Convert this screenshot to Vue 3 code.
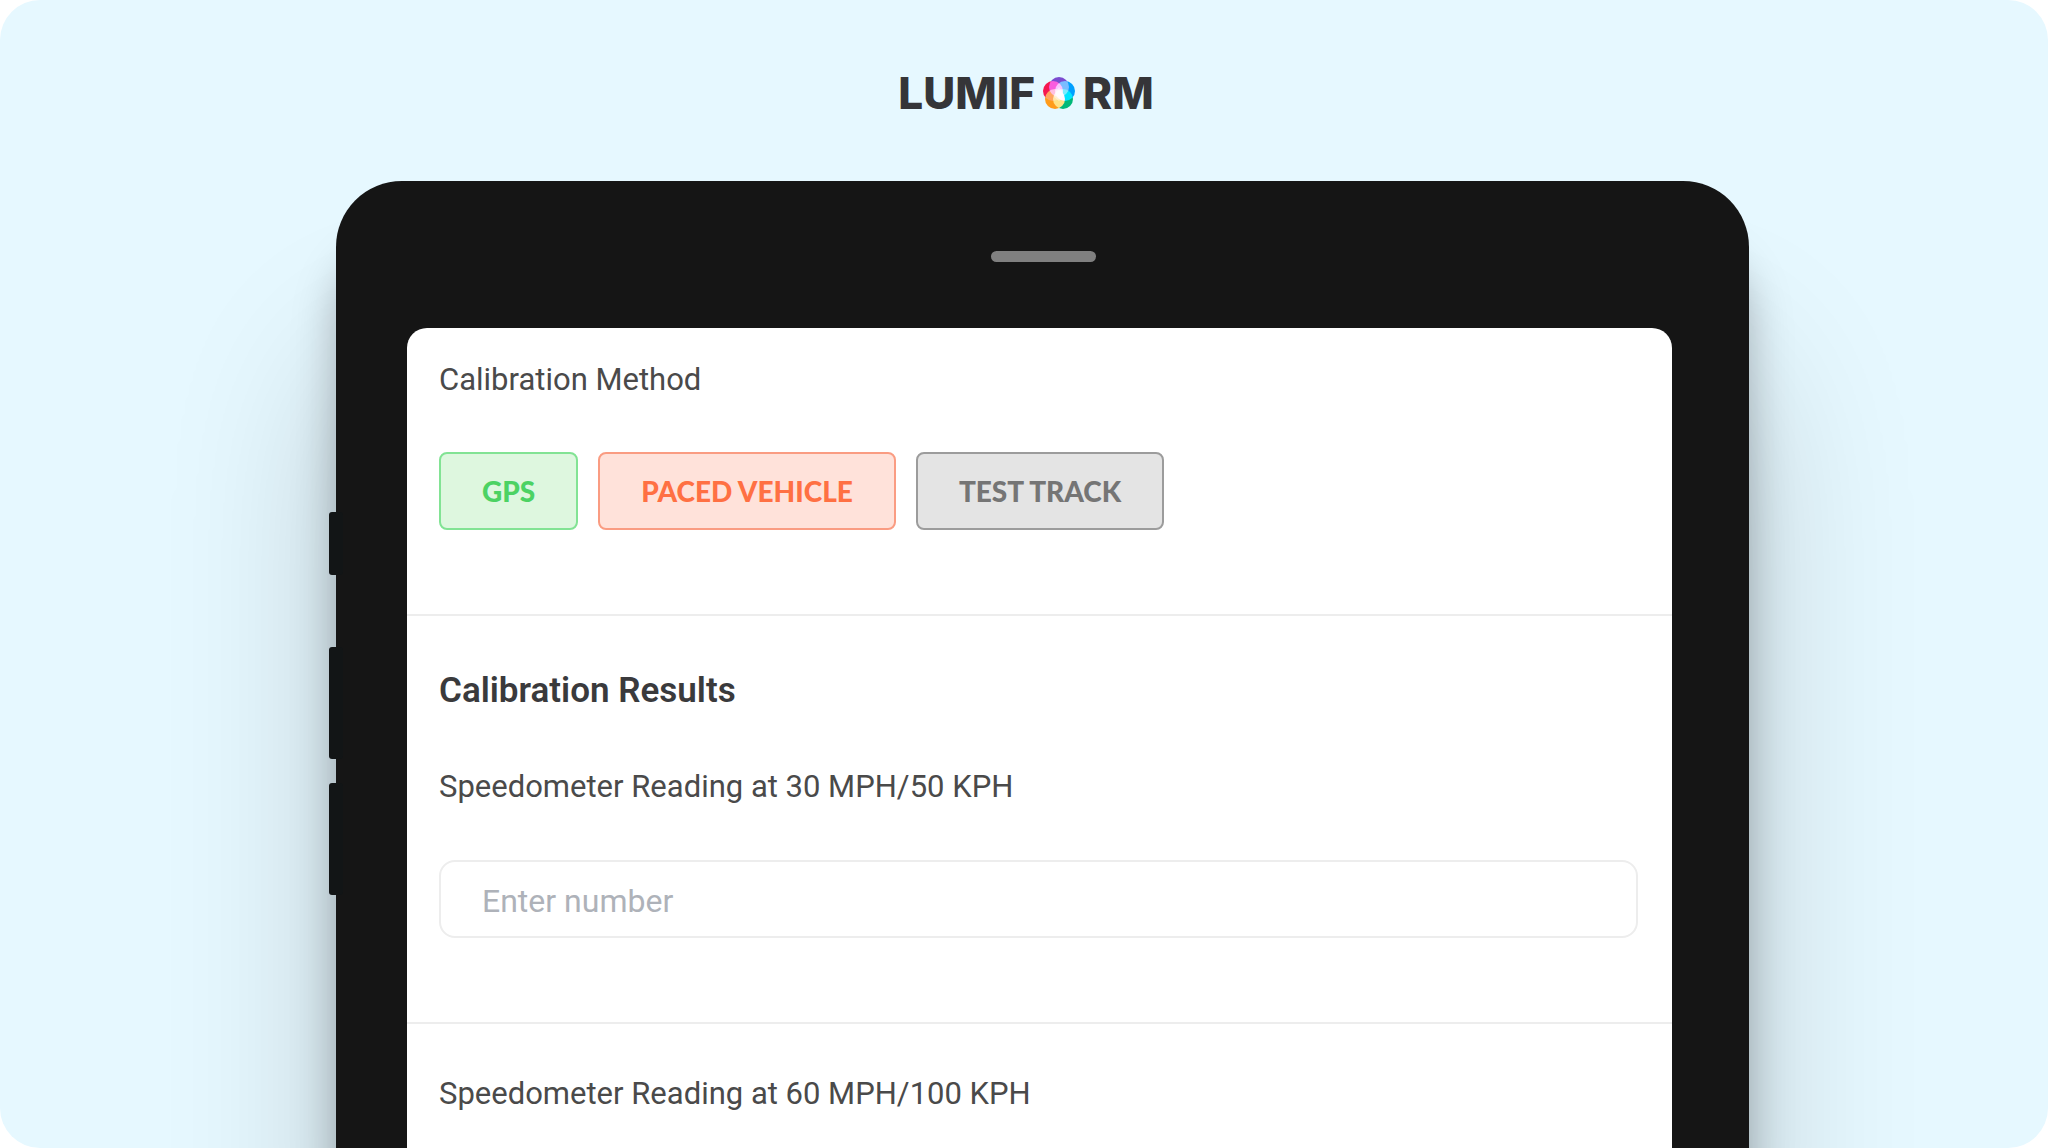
<script setup>
import { ref } from 'vue'

const methods = [
  { label: 'GPS', tone: 'green' },
  { label: 'PACED VEHICLE', tone: 'orange' },
  { label: 'TEST TRACK', tone: 'grey' },
]
const petals = [
  { cx: 16, cy: 10, fill: '#7b4bd0' },
  { cx: 22, cy: 14, fill: '#00a0ff' },
  { cx: 20, cy: 22, fill: '#00b878' },
  { cx: 12, cy: 22, fill: '#ff9c1a' },
  { cx: 10, cy: 14, fill: '#f5184f' },
]
const reading = ref('')
</script>

<template>
  <main class="scene">
    <header class="brand">
      <span>LUMIF</span>
      <svg class="flower" viewBox="0 0 32 32" aria-hidden="true">
        <circle v-for="p in petals" :key="p.fill" class="petal" :cx="p.cx" :cy="p.cy" r="10" :fill="p.fill" />
        <path d="M16 10 L19 14 L21 20 L16 24 L11 20 L13 14 Z" fill="#fff" opacity=".45" />
      </svg>
      <span>RM</span>
    </header>

    <div class="tablet">
      <div class="side-keys" aria-hidden="true">
        <i class="key small"></i>
        <i class="key"></i>
        <i class="key"></i>
      </div>
      <div class="bezel"><div class="speaker"></div></div>
      <form class="screen" @submit.prevent>
        <section class="first">
          <p id="method" class="label">Calibration Method</p>
          <div class="choices" role="group" aria-labelledby="method">
            <button v-for="m in methods" :key="m.label" type="button" :class="m.tone">{{ m.label }}</button>
          </div>
        </section>
        <section>
          <h2>Calibration Results</h2>
          <label class="label" for="reading30">Speedometer Reading at 30 MPH/50 KPH</label>
          <input id="reading30" v-model="reading" type="text" inputmode="decimal" placeholder="Enter number" />
        </section>
        <section class="last">
          <p class="label">Speedometer Reading at 60 MPH/100 KPH</p>
        </section>
      </form>
    </div>
  </main>
</template>

<style>
body {
  margin: 0;
  background: #fff;
}
</style>

<style scoped>
* {
  box-sizing: border-box;
}
.scene {
  display: flex;
  flex-direction: column;
  min-height: 100vh;
  overflow: hidden;
  border-radius: 40px;
  background: #e6f8ff;
  font-family: Roboto, sans-serif;
}
.brand {
  display: flex;
  align-items: center;
  justify-content: center;
  gap: 8px;
  height: 181px;
  padding: 4px 0 0 4px;
  color: #353538;
  font: 800 44px/48px Inter, sans-serif;
}
.flower {
  width: 32px;
  height: 32px;
  isolation: isolate;
}
.petal {
  mix-blend-mode: screen;
}
.tablet {
  position: relative;
  display: flex;
  flex: 1;
  flex-direction: column;
  margin: 0 299px 0 336px;
  padding: 0 77px 0 71px;
  border-radius: 66px 66px 0 0;
  background: #151515;
  box-shadow: 0 180px 170px rgba(0, 0, 0, 0.19), 0 70px 44px rgba(0, 0, 0, 0.26);
}
.side-keys {
  position: absolute;
  top: 331px;
  left: -7px;
  display: flex;
  flex-direction: column;
  gap: 24px;
}
.key {
  width: 14px;
  height: 112px;
  border-radius: 3px;
  background: #121516;
}
.key.small {
  height: 63px;
  margin-bottom: 48px;
}
.bezel {
  display: flex;
  justify-content: center;
  height: 147px;
  padding: 70px 0 0 7px;
}
.speaker {
  width: 105px;
  height: 11px;
  border-radius: 6px;
  background: #808080;
}
.screen {
  flex: 1;
  border-radius: 20px 20px 0 0;
  background: #fff;
}
section {
  padding: 55px 34px 84px 32px;
  border-bottom: 2px solid #ededed;
}
.first {
  padding-top: 32px;
}
.last {
  padding-top: 50px;
  padding-bottom: 0;
  border-bottom: 0;
}
.label {
  display: block;
  margin: 0;
  color: #4a4a4a;
  font-size: 31px;
  line-height: 40px;
}
h2 {
  margin: 0 0 56px;
  color: #3a3a3c;
  font-size: 35px;
  font-weight: 600;
  line-height: 40px;
}
.choices {
  display: flex;
  gap: 20px;
  margin-top: 52px;
}
button {
  height: 78px;
  padding: 0 41px;
  border: 2px solid;
  border-radius: 8px;
  font: 900 28px/36px Lato, sans-serif;
}
.green {
  border-color: #82e394;
  background: #def7df;
  color: #4cd263;
}
.orange {
  border-color: #fa9c82;
  background: #ffe2da;
  color: #ff7043;
}
.grey {
  border-color: #9c9c9c;
  background: #e4e4e4;
  color: #757575;
}
input {
  display: block;
  width: 100%;
  height: 78px;
  margin-top: 53px;
  padding: 3px 41px 0;
  border: 2px solid #ededed;
  border-radius: 16px;
  background: #fff;
  color: #4a4a4a;
  font: 32px/40px Roboto, sans-serif;
}
input::placeholder {
  color: #aeb2b9;
  opacity: 1;
}
</style>
